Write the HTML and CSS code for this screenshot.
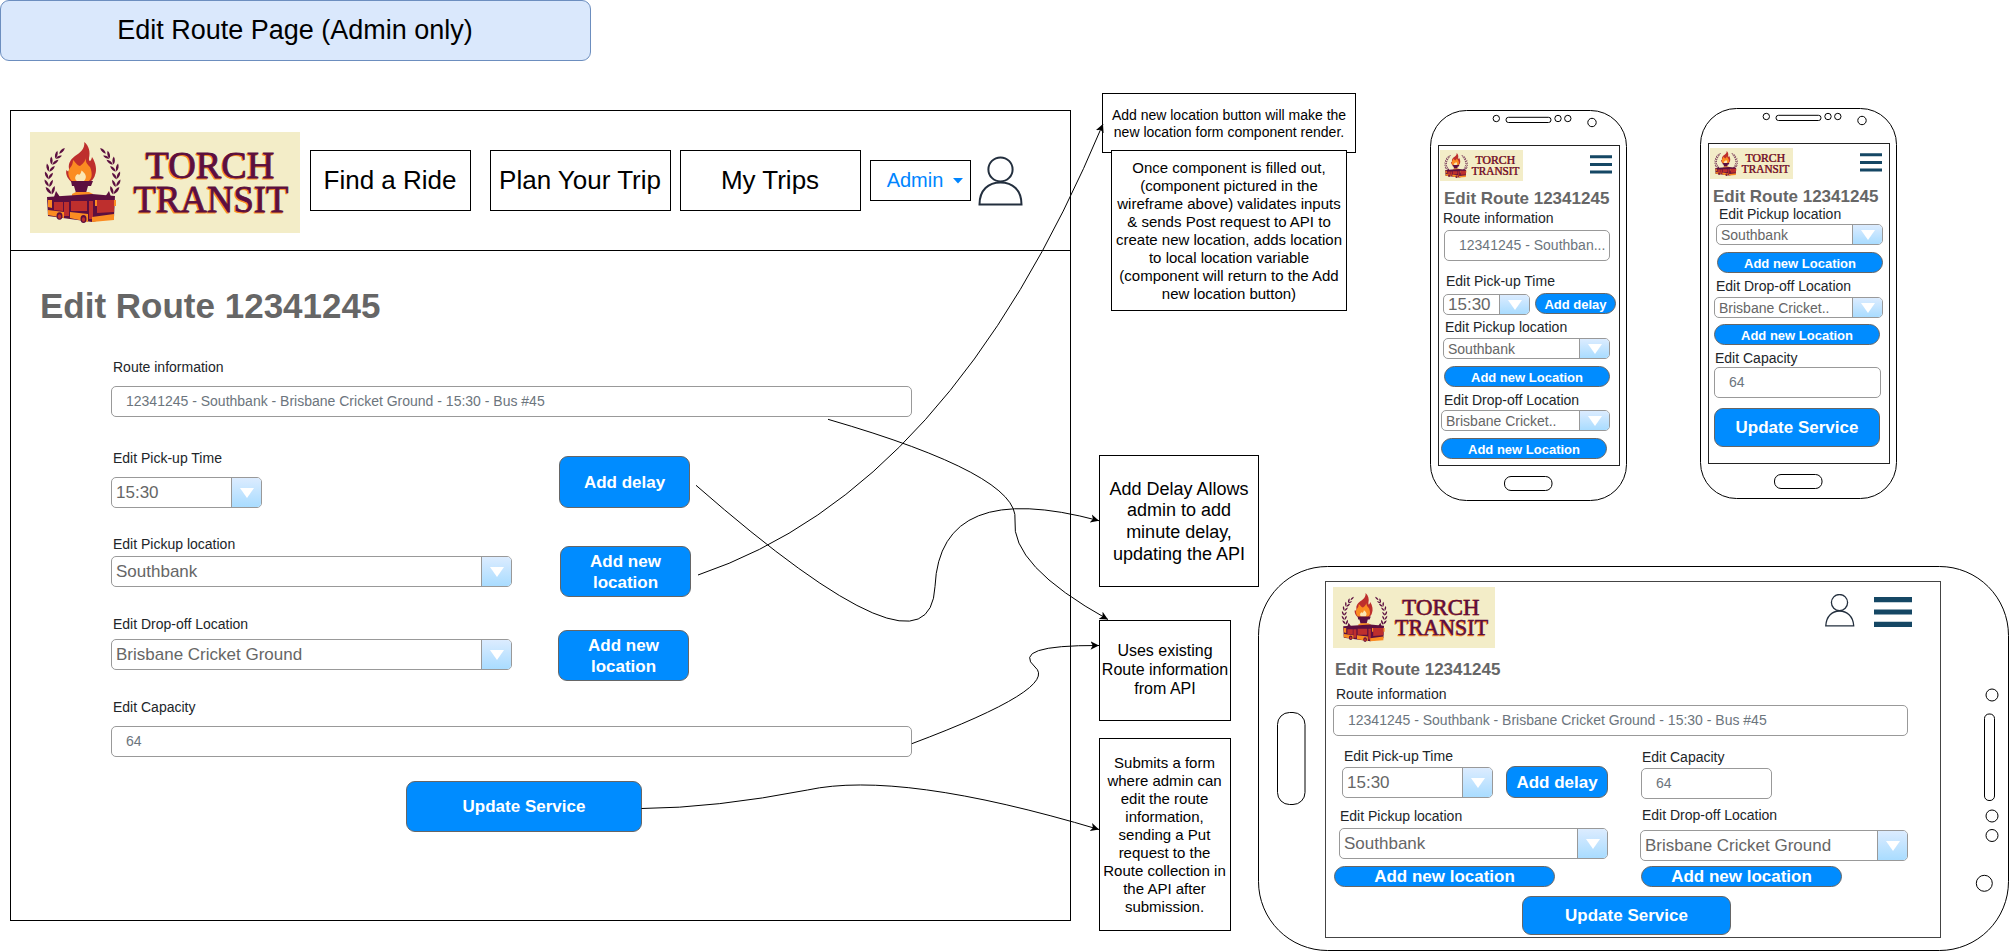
FILE: index.html
```html
<!DOCTYPE html>
<html lang="en">
<head>
<meta charset="utf-8">
<title>Edit Route Page</title>
<link rel="stylesheet" href="styles.css">
</head>
<body>
<svg class="defs" width="0" height="0" aria-hidden="true">
  <defs>
    <path id="leaf" d="M0 0.5C1.600-1.800 1.900-4.800 0.300-7.600C-1.600-5-1.600-2 0 0.500Z"/>
    <g id="wreath" fill="#5c0f3f">
      <use href="#leaf" transform="translate(29.500 21.500) rotate(42)"/>
      <use href="#leaf" transform="translate(25.500 26) rotate(12)"/>
      <use href="#leaf" transform="translate(26 26.500) rotate(62) scale(.85)"/>
      <use href="#leaf" transform="translate(21.500 32) rotate(-4)"/>
      <use href="#leaf" transform="translate(22.500 32.500) rotate(50)"/>
      <use href="#leaf" transform="translate(18.500 39) rotate(-14)"/>
      <use href="#leaf" transform="translate(19.500 39.500) rotate(42)"/>
      <use href="#leaf" transform="translate(18 46.500) rotate(-26)"/>
      <use href="#leaf" transform="translate(18.500 47) rotate(34)"/>
      <use href="#leaf" transform="translate(18.500 54) rotate(-34)"/>
      <use href="#leaf" transform="translate(19.500 54.500) rotate(24)"/>
      <use href="#leaf" transform="translate(21 61.500) rotate(-42) scale(1.1)"/>
      <use href="#leaf" transform="translate(22 62) rotate(16) scale(1.1)"/>
      <path d="M26 59L30 65H24Z"/>
    </g>
    <symbol id="logo" viewBox="0 0 270 101" preserveAspectRatio="none">
      <rect width="270" height="101" fill="#f3edc8"/>
      <use href="#wreath"/>
      <use href="#wreath" transform="translate(105 0) scale(-1 1)"/>
      <path d="M54.300 10C59 14 60.500 20 59 26C58.700 30 61 30 62 25C66 31 67 38 65 43C64 47 61 50 57 51H43C38 48 35 42 36.500 38C38 40 39 40 39 37C38 31 41 27 45 24C50 21 55 17 54.300 10Z" fill="#be2f2d"/>
      <path d="M56 24C55 30 57 32 60 35C63 42 62 48 57 50H43C38 46 37 40 40 36C42 34 43 31 43 28C46 31 48 34 50 34C54 31 56 28 56 24Z" fill="#fb8c22"/>
      <path d="M51.500 38.500C55 41 58 45 54 49H47C44 47 45 43 48 42C49 44 51 42 51.500 38.500Z" fill="#fbe7b4"/>
      <path d="M41 49H63L61 54H58L56 61H46L44 54H42Z" fill="#5c0f3f"/>
      <path d="M42 62L46 60H59L63 62V64H42Z" fill="#fb8c22"/>
      <path d="M17 65L62 62L85 64L84 85L62 90L18 84Z" fill="#5c0f3f"/>
      <path d="M24 70L33 70V79L24 78ZM41 69H57V79H41ZM67 68L84 68V80L67 81ZM34 70H39V84H34ZM59 69H63V87H59Z" fill="#be2f2d"/>
      <path d="M18 78L34 80V86L18 83ZM40 80L58 82V90L40 86ZM62 85L84 82V88L62 90ZM18 68H22V76L18 75Z" fill="#fb8c22"/>
      <ellipse cx="29.500" cy="84" rx="3" ry="3.800" fill="#5c0f3f"/><ellipse cx="29.500" cy="84.500" rx="1.600" ry="2.200" fill="#be2f2d"/>
      <ellipse cx="53.500" cy="87" rx="3" ry="4" fill="#5c0f3f"/><ellipse cx="53.500" cy="87.500" rx="1.600" ry="2.300" fill="#be2f2d"/>
      <path d="M66 68V74M85 68V74" stroke="#fb8c22" stroke-width="2"/>
      <g class="logo-text logo-glow">
        <text x="114.700" y="46.500" textLength="129" lengthAdjust="spacingAndGlyphs">TORCH</text>
        <text x="102.700" y="81.100" textLength="155" lengthAdjust="spacingAndGlyphs">TRANSIT</text>
      </g>
      <g class="logo-text">
        <text x="115.500" y="45.700" textLength="129" lengthAdjust="spacingAndGlyphs">TORCH</text>
        <text x="103.500" y="80.300" textLength="155" lengthAdjust="spacingAndGlyphs">TRANSIT</text>
      </g>
    </symbol>
    <symbol id="burger" viewBox="0 0 22 19">
      <path d="M0 0.300H22V3.300H0ZM0 8H22V11H0ZM0 15.500H22V18.500H0Z" fill="#154764"/>
    </symbol>
    <symbol id="phone" viewBox="0 0 197 391">
      <g fill="none" stroke="#000">
        <rect x=".5" y=".5" width="196" height="390" rx="36"/>
        <circle cx="66.300" cy="8.500" r="3.200"/><rect x="76" y="7.300" width="45" height="5.200" rx="2.500"/>
        <circle cx="128" cy="8.500" r="3.200"/><circle cx="137.800" cy="8.500" r="3.200"/>
        <circle cx="162" cy="12.500" r="4.200"/>
        <rect x="74.500" y="366.500" width="47.500" height="14" rx="6.500"/>
      </g>
    </symbol>
  </defs>
</svg>

<main class="canvas">
  <h1 class="title">Edit Route Page (Admin only)</h1>

  <section class="desktop">
    <header class="topbar">
      <svg class="logo logo-lg"><use href="#logo"/></svg>
      <nav class="nav">
        <a class="nav-item nav-find">Find a Ride</a>
        <a class="nav-item">Plan Your Trip</a>
        <a class="nav-item">My Trips</a>
        <a class="nav-item nav-admin">Admin<svg class="caret" viewBox="0 0 10 6"><path d="M0 0H10L5 5.500Z" fill="#0085ff"/></svg></a>
      </nav>
      <svg class="user-lg" viewBox="0 0 46 50" fill="none" stroke="#232f3e" stroke-width="2">
        <ellipse cx="22.500" cy="13.400" rx="12.100" ry="12"/><path d="M1.500 48.500C1.500 34 10.500 26.500 22.500 26.500S43.500 34 43.500 48.500Z"/>
      </svg>
    </header>
    <h2 class="heading heading-lg">Edit Route 12341245</h2>
    <form class="form">
      <label class="label">Route information</label>
      <div class="input gap-11">12341245 - Southbank - Brisbane Cricket Ground - 15:30 - Bus #45</div>
      <div class="row row-time">
        <div class="field field-short">
          <label class="label">Edit Pick-up Time</label>
          <div class="select gap-10"><span class="value">15:30</span><i class="drop"><svg viewBox="0 0 14 10"><path d="M0 0H14L7 10Z"/></svg></i></div>
        </div>
        <div class="button tall">Add delay</div>
      </div>
      <div class="row row-pickup">
        <div class="field">
          <label class="label">Edit Pickup location</label>
          <div class="select gap-4"><span class="value">Southbank</span><i class="drop"><svg viewBox="0 0 14 10"><path d="M0 0H14L7 10Z"/></svg></i></div>
        </div>
        <div class="button tall">Add new<br>location</div>
      </div>
      <div class="row row-dropoff">
        <div class="field">
          <label class="label">Edit Drop-off Location</label>
          <div class="select gap-7"><span class="value">Brisbane Cricket Ground</span><i class="drop"><svg viewBox="0 0 14 10"><path d="M0 0H14L7 10Z"/></svg></i></div>
        </div>
        <div class="button tall">Add new<br>location</div>
      </div>
      <label class="label label-capacity">Edit Capacity</label>
      <div class="input gap-11">64</div>
      <div class="button update-lg">Update Service</div>
    </form>
  </section>

  <aside class="note note-render">Add new location button will make the new location form component render.</aside>
  <aside class="note note-create">Once component is filled out, (component pictured in the wireframe above) validates inputs &amp; sends Post request to API to create new location, adds location to local location variable (component will return to the Add new location button)</aside>
  <aside class="note note-delay">Add Delay Allows admin to add minute delay, updating the API</aside>
  <aside class="note note-info">Uses existing<br>Route information<br>from API</aside>
  <aside class="note note-submit">Submits a form<br>where admin can<br>edit the route<br>information,<br>sending a Put<br>request to the<br>Route collection in<br>the API after<br>submission.</aside>

  <section class="phone phone-a">
    <svg class="shell"><use href="#phone"/></svg>
    <div class="screen">
      <header class="bar"><svg class="logo logo-sm"><use href="#logo"/></svg><svg class="burger"><use href="#burger"/></svg></header>
      <h2 class="heading">Edit Route 12341245</h2>
      <label class="label a-route">Route information</label>
      <div class="input a-route-input">12341245 - Southban...</div>
      <label class="label a-time">Edit Pick-up Time</label>
      <div class="row a-time-row">
        <div class="select slim"><span class="value">15:30</span><i class="drop"><svg viewBox="0 0 14 10"><path d="M0 0H14L7 10Z"/></svg></i></div>
        <div class="button slim">Add delay</div>
      </div>
      <label class="label a-pickup">Edit Pickup location</label>
      <div class="select slim small a-pickup-select"><span class="value">Southbank</span><i class="drop"><svg viewBox="0 0 14 10"><path d="M0 0H14L7 10Z"/></svg></i></div>
      <div class="button slim a-pickup-add">Add new Location</div>
      <label class="label a-drop">Edit Drop-off Location</label>
      <div class="select slim small a-drop-select"><span class="value">Brisbane Cricket..</span><i class="drop"><svg viewBox="0 0 14 10"><path d="M0 0H14L7 10Z"/></svg></i></div>
      <div class="button slim a-drop-add">Add new Location</div>
    </div>
  </section>

  <section class="phone phone-b">
    <svg class="shell"><use href="#phone"/></svg>
    <div class="screen">
      <header class="bar"><svg class="logo logo-sm"><use href="#logo"/></svg><svg class="burger"><use href="#burger"/></svg></header>
      <h2 class="heading">Edit Route 12341245</h2>
      <label class="label b-pickup">Edit Pickup location</label>
      <div class="select slim small b-pickup-select"><span class="value">Southbank</span><i class="drop"><svg viewBox="0 0 14 10"><path d="M0 0H14L7 10Z"/></svg></i></div>
      <div class="button slim b-pickup-add">Add new Location</div>
      <label class="label b-drop">Edit Drop-off Location</label>
      <div class="select slim small b-drop-select"><span class="value">Brisbane Cricket..</span><i class="drop"><svg viewBox="0 0 14 10"><path d="M0 0H14L7 10Z"/></svg></i></div>
      <div class="button slim b-drop-add">Add new Location</div>
      <label class="label b-capacity">Edit Capacity</label>
      <div class="input b-capacity-input">64</div>
      <div class="button b-update">Update Service</div>
    </div>
  </section>

  <section class="tablet">
    <svg class="shell" viewBox="0 0 751 385" fill="none" stroke="#000">
      <rect x=".5" y=".5" width="750" height="384" rx="69"/>
      <rect x="19.500" y="146.500" width="27.500" height="92" rx="12"/>
      <circle cx="734" cy="129" r="6"/><rect x="726.500" y="148" width="10" height="86.500" rx="4.500"/>
      <circle cx="734" cy="250" r="6"/><circle cx="734" cy="269.500" r="6"/><circle cx="726.300" cy="317.300" r="8"/>
    </svg>
    <div class="screen">
      <header class="bar">
        <svg class="logo logo-md"><use href="#logo"/></svg>
        <div class="bar-icons">
          <svg class="user-md" viewBox="0 0 30 33" fill="none" stroke="#232f3e" stroke-width="1.300">
            <circle cx="14.500" cy="8.600" r="8.100"/><path d="M.8 31.800C1.300 22 7.300 17 14.500 17S28.200 22 28.700 31.800Z"/>
          </svg>
          <svg class="burger-md" viewBox="0 0 38 30"><path d="M0 0H38V5.200H0ZM0 12.400H38V17.600H0ZM0 24.800H38V30H0Z" fill="#154764"/></svg>
        </div>
      </header>
      <h2 class="heading">Edit Route 12341245</h2>
      <label class="label t-route">Route information</label>
      <div class="input t-route-input">12341245 - Southbank - Brisbane Cricket Ground - 15:30 - Bus #45</div>
      <div class="columns">
        <div class="col-left">
          <label class="label t-time">Edit Pick-up Time</label>
          <div class="row t-time-row">
            <div class="select"><span class="value">15:30</span><i class="drop"><svg viewBox="0 0 14 10"><path d="M0 0H14L7 10Z"/></svg></i></div>
            <div class="button">Add delay</div>
          </div>
          <label class="label t-pickup">Edit Pickup location</label>
          <div class="select t-pickup-select"><span class="value">Southbank</span><i class="drop"><svg viewBox="0 0 14 10"><path d="M0 0H14L7 10Z"/></svg></i></div>
          <div class="button pill t-pickup-add">Add new location</div>
        </div>
        <div class="col-right">
          <label class="label t-capacity">Edit Capacity</label>
          <div class="input t-capacity-input">64</div>
          <label class="label t-drop">Edit Drop-off Location</label>
          <div class="select t-drop-select"><span class="value">Brisbane Cricket Ground</span><i class="drop"><svg viewBox="0 0 14 10"><path d="M0 0H14L7 10Z"/></svg></i></div>
          <div class="button pill t-drop-add">Add new location</div>
        </div>
      </div>
      <div class="button t-update">Update Service</div>
    </div>
  </section>

  <svg class="connectors" viewBox="0 0 2009 951" fill="none" stroke="#000">
    <defs>
      <marker id="arrow" markerUnits="userSpaceOnUse" markerWidth="10" markerHeight="10" refX="8.500" refY="4.500" orient="auto">
        <path d="M8.500 4.500L0 8.700L2.200 4.500L0 .3Z" fill="#000" stroke="none"/>
      </marker>
    </defs>
    <path d="M698 575Q950 490 1103 124" marker-end="url(#arrow)"/>
    <path d="M828 419.300Q1020 475 1015 520Q1010 565 1108 619.500" marker-end="url(#arrow)"/>
    <path d="M696 485.300Q930 690 935 586.500Q940 478 1099 520.700" marker-end="url(#arrow)"/>
    <path d="M911.800 743.700Q1060 688 1035 667Q1010 645 1099 645.500" marker-end="url(#arrow)"/>
    <path d="M641.500 808.500Q715 808 807.500 790Q900 770 1099 829.500" marker-end="url(#arrow)"/>
  </svg>
</main>
</body>
</html>
```
FILE: styles.css
```css
* { box-sizing: border-box; }
body {
  margin: 0;
  background: #fff;
  color: #000;
  font-family: "Liberation Sans", Arial, Helvetica, sans-serif;
}
h1, h2 { margin: 0; }
svg { display: block; flex: none; }
.defs { position: absolute; }
.canvas { position: relative; width: 2009px; height: 951px; overflow: hidden; }

.title {
  display: flex;
  align-items: center;
  justify-content: center;
  width: 591px;
  height: 61px;
  padding-right: 1px;
  border: 1px solid #6c8ebf;
  border-radius: 9px;
  background: #dae8fc;
  font-size: 27px;
  font-weight: 400;
}

/* shared controls */
.heading { color: #666; font-size: 17px; line-height: 20px; font-weight: 700; white-space: nowrap; }
.label { display: block; color: #212529; font-size: 14px; line-height: 16px; white-space: nowrap; }
.input {
  display: flex;
  align-items: center;
  height: 31px;
  padding: 0 0 1px 14px;
  border: 1px solid #999;
  border-radius: 5px;
  color: #6c757d;
  font-size: 14px;
  line-height: 16px;
  white-space: nowrap;
}
.select {
  display: flex;
  height: 31px;
  border: 1px solid #999;
  border-radius: 5px;
  overflow: hidden;
  color: #666;
  font-size: 17px;
  white-space: nowrap;
}
.value { display: flex; flex: 1; align-items: center; padding-left: 4px; }
.drop {
  display: flex;
  align-items: center;
  justify-content: center;
  width: 30px;
  border-left: 1px solid #999;
  background: linear-gradient(#dcecff, #a9dcff);
}
.drop svg { width: 14px; height: 10px; fill: #fff; }
.button {
  display: flex;
  align-items: center;
  justify-content: center;
  border: 1px solid #666;
  border-radius: 9px;
  background: #008cff;
  color: #fff;
  font-size: 17px;
  line-height: 21px;
  font-weight: 700;
  text-align: center;
  white-space: nowrap;
}
.row { display: flex; align-items: flex-start; }
.slim { height: 21px; }
.small { font-size: 14px; }
.button.slim { padding-top: 2px; border-radius: 11px; font-size: 13px; line-height: 16px; }
.pill { height: 21px; border-radius: 11px; }
.gap-4 { margin-top: 4px; }
.gap-7 { margin-top: 7px; }
.gap-10 { margin-top: 11px; }
.gap-11 { margin-top: 11px; }

/* logo */
.logo-lg { width: 270px; height: 101px; margin-top: 4px; }
.logo-md { width: 162px; height: 61px; }
.logo-sm { width: 83px; height: 31px; }
.logo-text { font-family: "Liberation Serif", serif; font-size: 38.5px; fill: #5c0f3f; stroke: #5c0f3f; stroke-width: .8px; }
.logo-glow { fill: #fb8c22; stroke: #fb8c22; }

/* desktop window */
.desktop { position: absolute; left: 10px; top: 110px; width: 1061px; height: 811px; border: 1px solid #000; }
.topbar { display: flex; align-items: center; height: 140px; padding-left: 19px; border-bottom: 1px solid #000; }
.nav { display: flex; align-items: center; gap: 9px; margin: 0 7px 0 10px; }
.nav-item {
  display: flex;
  align-items: center;
  justify-content: center;
  width: 181px;
  height: 61px;
  padding-right: 1px;
  border: 1px solid #000;
  font-size: 26px;
}
.nav-find { width: 161px; margin-right: 10px; }
.nav-admin { width: 101px; height: 41px; gap: 10px; padding: 0 0 0 9px; color: #0085ff; font-size: 20px; }
.caret { width: 10px; height: 6px; }
.user-lg { width: 46px; height: 50px; }
.heading-lg { margin: 35px 0 0 29px; font-size: 35px; line-height: 40px; }
.form { width: 901px; margin-top: 33px; padding-left: 100px; }
.form .label { padding-left: 2px; }
.field { width: 401px; }
.field-short { width: 151px; }
.tall { width: 131px; height: 51px; }
.row-time { height: 58px; margin-top: 33px; }
.row-time .button { height: 52px; margin: 6px 0 0 297px; }
.row-pickup { height: 61px; margin-top: 28px; }
.row-pickup .button { margin: 10px 0 0 48px; }
.row-dropoff { height: 65px; margin-top: 19px; }
.row-dropoff .button { margin: 14px 0 0 46px; }
.label-capacity { margin-top: 18px; }
.update-lg { width: 236px; height: 51px; margin: 24px 0 0 295px; }

/* annotations */
.note {
  position: absolute;
  display: flex;
  align-items: center;
  justify-content: center;
  border: 1px solid #000;
  background: #fff;
  text-align: center;
}
.note-render { left: 1102px; top: 93px; width: 254px; height: 60px; padding: 2px 6px 0; font-size: 14px; line-height: 17px; }
.note-create { left: 1111px; top: 150px; width: 236px; height: 161px; font-size: 15px; line-height: 18px; }
.note-delay { left: 1099px; top: 455px; width: 160px; height: 132px; padding: 2px 8px 0; font-size: 18px; line-height: 21.6px; }
.note-info { left: 1099px; top: 620px; width: 132px; height: 101px; padding-bottom: 2px; font-size: 16px; line-height: 19px; white-space: nowrap; }
.note-submit { left: 1099px; top: 738px; width: 132px; height: 193px; padding-right: 1px; font-size: 15px; line-height: 18px; white-space: nowrap; }

/* devices */
.phone { position: absolute; width: 197px; height: 391px; padding: 35px 0 0 8px; }
.phone-a { left: 1430px; top: 110px; }
.phone-b { left: 1700px; top: 108px; }
.tablet { position: absolute; left: 1258px; top: 566px; width: 751px; height: 385px; padding: 15px 0 0 67px; }
.shell { position: absolute; left: 0; top: 0; width: 100%; height: 100%; }
.screen { display: flex; flex-direction: column; align-items: flex-start; width: 182px; height: 321px; border: 1px solid #222; }
.bar { display: flex; align-self: stretch; justify-content: space-between; padding: 4px 7px 0 1px; }
.burger { width: 22px; height: 19px; margin-top: 5px; }
.phone .heading { margin: 8px 0 0 4px; }

.phone-a .heading { margin-left: 5px; }
.a-route { margin: 1px 0 0 4px; }
.a-route-input { width: 166px; margin: 4px 0 0 5px; }
.a-time { margin: 12px 0 0 7px; }
.a-time-row { margin: 4px 0 0 4px; gap: 5px; }
.a-time-row .select { width: 87px; margin-top: 1px; }
.a-time-row .button { width: 81px; }
.a-pickup { margin: 4px 0 0 6px; }
.a-pickup-select { width: 167px; margin: 3px 0 0 4px; }
.a-pickup-add { width: 166px; margin: 7px 0 0 5px; }
.a-drop { margin: 5px 0 0 5px; }
.a-drop-select { width: 169px; margin: 2px 0 0 2px; }
.a-drop-add { width: 166px; margin: 7px 0 0 2px; }

.b-pickup { margin: -1px 0 0 10px; }
.b-pickup-select { width: 167px; margin: 2px 0 0 7px; }
.b-pickup-add { width: 166px; margin: 7px 0 0 8px; }
.b-drop { margin: 5px 0 0 7px; }
.b-drop-select { width: 169px; margin: 3px 0 0 5px; }
.b-drop-add { width: 166px; margin: 6px 0 0 5px; }
.b-capacity { margin: 5px 0 0 6px; }
.b-capacity-input { width: 167px; margin: 1px 0 0 5px; }
.b-update { width: 166px; height: 39px; margin: 10px 0 0 5px; }

.tablet .screen { width: 616px; height: 357px; border-color: #444; }
.tablet .bar { padding: 5px 28px 0 7px; }
.bar-icons { display: flex; gap: 19px; padding-top: 7px; }
.user-md { width: 30px; height: 33px; }
.burger-md { width: 38px; height: 30px; margin-top: 3px; }
.tablet .heading { margin: 12px 0 0 9px; }
.t-route { margin: 6px 0 0 10px; }
.t-route-input { width: 575px; margin: 3px 0 0 7px; }
.columns { display: flex; margin-top: 12px; padding-left: 7px; }
.col-left { width: 307px; }
.t-time { margin-left: 11px; }
.t-time-row { margin: 2px 0 0 9px; gap: 13px; }
.t-time-row .select { width: 151px; margin-top: 1px; }
.t-time-row .button { width: 102px; height: 32px; }
.t-pickup { margin: 10px 0 0 7px; }
.t-pickup-select { width: 269px; margin: 4px 0 0 6px; }
.t-pickup-add { width: 221px; margin: 7px 0 0 1px; }
.t-capacity { margin: 1px 0 0 2px; }
.t-capacity-input { width: 131px; margin: 3px 0 0 1px; }
.t-drop { margin: 8px 0 0 2px; }
.t-drop-select { width: 268px; margin-top: 7px; }
.t-drop-add { width: 201px; margin: 5px 0 0 1px; }
.t-update { width: 209px; height: 39px; margin: 9px 0 0 196px; }

.connectors { position: absolute; left: 0; top: 0; width: 2009px; height: 951px; pointer-events: none; }
```
